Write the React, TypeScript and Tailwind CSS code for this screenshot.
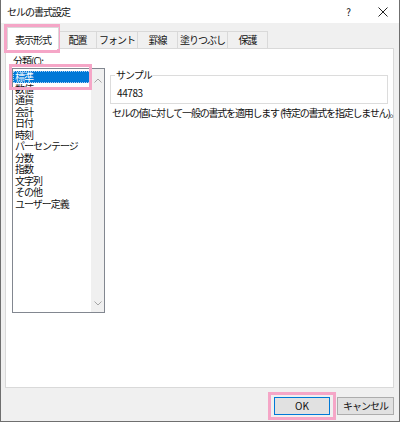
const categories = [
  '標準',
  '数値',
  '通貨',
  '会計',
  '日付',
  '時刻',
  'パーセンテージ',
  '分数',
  '指数',
  '文字列',
  'その他',
  'ユーザー定義',
];

const tabs = [
  { label: '配置', w: 'w-[38px]' },
  { label: 'フォント', w: 'w-[41px]' },
  { label: '罫線', w: 'w-[40px]' },
  { label: '塗りつぶし', w: 'w-[50px]' },
  { label: '保護', w: 'w-[40px]' },
];

function Chevron({ up }: { up?: boolean }) {
  return (
    <svg width="8" height="5" viewBox="0 0 8 5" className="block">
      <path
        d={up ? 'M0.5 4.5 L4 1 L7.5 4.5' : 'M0.5 0.5 L4 4 L7.5 0.5'}
        fill="none"
        stroke="#a6a6a6"
        strokeWidth="1"
      />
    </svg>
  );
}

export default function App() {
  return (
    <div className="relative w-[400px] h-[422px] flex flex-col bg-[#f0f0f0] border-x border-b border-[#6f6f6f] text-[#111] text-[10px] tracking-[-1px] font-['Noto_Sans_CJK_JP','Noto_Sans',sans-serif] overflow-hidden">
      {/* Title bar */}
      <div className="h-[23px] bg-white flex items-center pl-[6px] pr-[11px] shrink-0">
        <span className="leading-[14px]">セルの書式設定</span>
        <span className="ml-auto w-[10px] text-center leading-[14px]">?</span>
        <svg width="10" height="10" viewBox="0 0 10 10" className="ml-[25px]">
          <path d="M0.5 0.5 L9.5 9.5 M9.5 0.5 L0.5 9.5" stroke="#222" strokeWidth="1" />
        </svg>
      </div>

      {/* Tabs */}
      <div className="h-[25px] flex items-end pl-[6px] shrink-0">
        <div className="relative z-10 -mb-px h-[22px] w-[52px] bg-white border border-b-0 border-[#d9d9d9] flex items-center justify-center pt-[3px] leading-[14px]">
          表示形式
        </div>
        {tabs.map((t) => (
          <div
            key={t.label}
            className={`${t.w} h-[17px] border-t border-r border-[#d9d9d9] flex items-center justify-center leading-[14px]`}
          >
            {t.label}
          </div>
        ))}
      </div>

      {/* Panel */}
      <div className="ml-[4px] w-[389px] h-[340px] shrink-0 bg-white border border-[#d9d9d9] flex pl-[6px] pt-[5px]">
        <div className="flex flex-col w-[93px]">
          <div className="pl-[1px] leading-[14px] h-[14px]">
            分類(<span className="underline">C</span>):
          </div>
          <div className="h-[245px] border border-[#828790] flex">
            <div className="w-[78px] pt-[2px] flex flex-col">
              {categories.map((c, i) => (
                <div
                  key={c}
                  className={
                    i === 0
                      ? 'h-[11.5px] leading-[10px] pl-px bg-[#0078d7] text-white border border-dotted border-[#a9d0f5] whitespace-nowrap'
                      : 'h-[11.5px] leading-[11.5px] pl-[2px] whitespace-nowrap'
                  }
                >
                  {c}
                </div>
              ))}
            </div>
            <div className="w-[13px] bg-[#f0f0f0] flex flex-col items-center justify-between pt-[9px] pb-[6px]">
              <Chevron up />
              <Chevron />
            </div>
          </div>
        </div>

        <div className="ml-[5px] w-[280px] pt-[14px] flex flex-col">
          <fieldset className="w-[278px] border border-[#dcdcdc] pl-[6px] pt-[4px] pb-[3px]">
            <legend className="-ml-[2px] px-[1px] leading-[14px]">サンプル</legend>
            <div className="leading-[14px] tracking-[-0.4px]">44783</div>
          </fieldset>
          <div className="mt-[2px] pl-[2px] leading-[14px] whitespace-nowrap tracking-[-1.2px]">
            セルの値に対して一般の書式を適用します (特定の書式を指定しません)。
          </div>
        </div>
      </div>

      {/* Buttons */}
      <div className="flex-1 flex justify-end items-start pt-[9px] pr-[5px] gap-[7px]">
        <button className="w-[56px] h-[18px] bg-[#e1e1e1] border border-[#0078d7] leading-[14px] tracking-normal flex items-center justify-center">
          OK
        </button>
        <button className="w-[57px] h-[18px] bg-[#e1e1e1] border border-[#adadad] leading-[14px] flex items-center justify-center">
          キャンセル
        </button>
      </div>

      {/* Pink highlight boxes */}
      <div className="absolute left-[3px] top-[24px] w-[56px] h-[29px] border-[3px] border-[#f5a6c7] pointer-events-none" />
      <div className="absolute left-[8px] top-[64px] w-[83px] h-[26px] border-[3px] border-[#f5a6c7] pointer-events-none" />
      <div className="absolute left-[267px] top-[392px] w-[68px] h-[28px] border-[3px] border-[#f5a6c7] pointer-events-none" />
    </div>
  );
}
